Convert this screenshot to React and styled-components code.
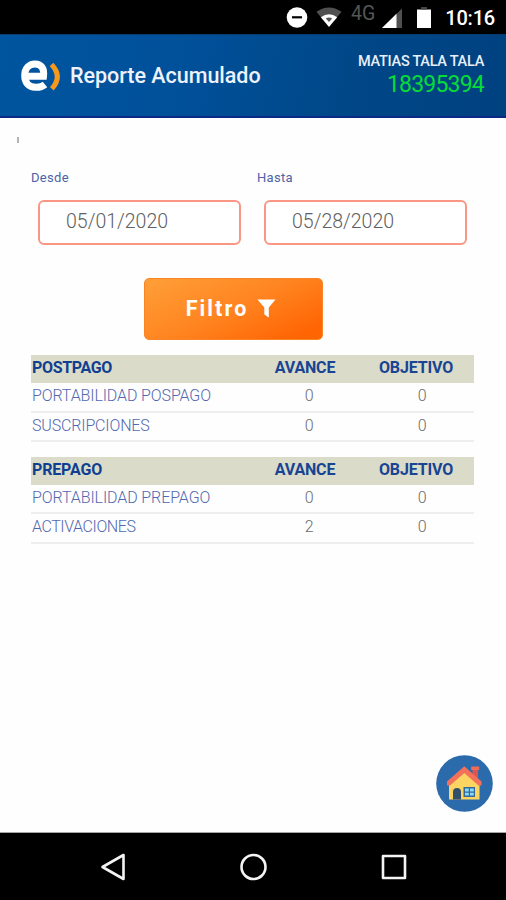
import React, { useState } from "react";
import styled, { createGlobalStyle } from "styled-components";

const GlobalStyle = createGlobalStyle`
    * {
        box-sizing: border-box;
    }
    body {
        margin: 0;
        background-color: #ffffff;
        font-family: Roboto, "Liberation Sans", sans-serif;
    }
`;

const Screen = styled.div`
    width: 506px;
    height: 900px;
    display: flex;
    flex-direction: column;
    background-color: #fefefe;
    overflow: hidden;
`;

const StatusBar = styled.div`
    height: 34px;
    flex-shrink: 0;
    background-color: #000000;
    display: flex;
    justify-content: flex-end;
    padding-right: 11px;
`;

const Clock = styled.span`
    width: 50px;
    margin-left: 14px;
    font-size: 20px;
    line-height: 37px;
    font-weight: 500;
    letter-spacing: -0.2px;
    text-align: right;
    white-space: nowrap;
    color: #ffffff;
`;

const Network = styled.span`
    width: 25px;
    margin: 0 6px 0 9px;
    font-size: 19.5px;
    line-height: 27px;
    font-weight: 400;
    color: #555555;
`;

const Header = styled.header`
    height: 84px;
    flex-shrink: 0;
    display: flex;
    justify-content: space-between;
    padding: 0 22px 0 20px;
    background: linear-gradient(100deg, #00559f 0%, #00509a 35%, #004787 70%, #004180 100%);
    border-top: 1px solid #063c6e;
    border-bottom: 2px solid #0a2a86;
`;

const Brand = styled.div`
    display: flex;
    align-items: center;
`;

const Title = styled.h1`
    margin: 0 0 0 8px;
    font-size: 21.5px;
    line-height: 26px;
    font-weight: 500;
    letter-spacing: -0.02px;
    color: #eef3fb;
`;

const User = styled.div`
    padding-top: 17px;
    text-align: right;
`;

const UserName = styled.div`
    font-size: 14.5px;
    line-height: 20px;
    font-weight: 500;
    letter-spacing: -0.27px;
    color: #e9effa;
`;

const UserCode = styled.div`
    font-size: 23px;
    line-height: 26px;
    letter-spacing: -0.8px;
    color: #06dc38;
`;

const Content = styled.main`
    flex: 1;
    display: flex;
    flex-direction: column;
    padding: 19px 32px 0 31px;
`;

const Mark = styled.div`
    width: 2px;
    height: 6px;
    margin-left: -14px;
    background-color: #b4b4b4;
`;

const Filters = styled.form`
    display: flex;
    flex-direction: column;
    margin-top: 25px;
`;

const Dates = styled.div`
    display: grid;
    grid-template-columns: 226px 1fr;
`;

const Label = styled.label`
    display: block;
    height: 20px;
    font-size: 13px;
    line-height: 20px;
    letter-spacing: 0.3px;
    color: #4d63a6;
`;

const Input = styled.input`
    display: block;
    width: 203px;
    height: 45px;
    margin: 12px 0 0 7px;
    padding: 0 0 3px 26px;
    border: 2px solid #fa9684;
    border-radius: 6px;
    background-color: #ffffff;
    font-family: inherit;
    font-size: 19.5px;
    font-weight: 300;
    letter-spacing: 0;
    color: #606060;
    outline: none;
`;

const FilterButton = styled.button`
    width: 179px;
    height: 62px;
    margin: 33px 0 0 113px;
    padding: 0 5px 2px 0;
    display: flex;
    align-items: center;
    justify-content: center;
    gap: 9px;
    border: 1px solid #f98526;
    border-radius: 5px;
    background: linear-gradient(155deg, #ff9f38 0%, #ff8420 50%, #ff6503 90%);
    font-family: inherit;
    font-size: 21.5px;
    font-weight: 700;
    letter-spacing: 2.1px;
    color: #ffffff;
`;

const Table = styled.section`
    margin-top: ${(props) => props.$top}px;
`;

const Row = styled.div`
    display: grid;
    grid-template-columns: 223px 110px 6px 104px;
    height: ${(props) => props.$height}px;
    line-height: 26px;
    font-size: 16px;
    font-weight: 300;
    border-bottom: 2px solid #eceeef;
    color: #6b6b6b;
`;

const HeadRow = styled(Row)`
    height: 28px;
    border-bottom: none;
    background-color: #dadbc9;
    font-weight: 700;
    color: #174493;
`;

const Name = styled.span`
    padding-left: 1px;
    white-space: nowrap;
    letter-spacing: ${(props) => props.$spacing || 0}px;
    color: ${(props) => (props.$head ? "#103f91" : "#5268b0")};
`;

const Value = styled.span`
    grid-column: ${(props) => props.$column};
    padding-right: ${(props) => props.$shift || 0}px;
    letter-spacing: -0.15px;
    text-align: center;
`;

const HomeButton = styled.button`
    width: 58px;
    height: 58px;
    margin: auto -19px 20px auto;
    padding: 0;
    border: none;
    background: none;
`;

const NavBar = styled.nav`
    height: 68px;
    flex-shrink: 0;
    display: flex;
    align-items: center;
    justify-content: space-between;
    padding: 0 98px 0 99px;
    border-top: 1px solid #a5a5a5;
    background-color: #000000;
`;

const StatusIcons = () => (
    <svg width="56" height="34" viewBox="286 0 56 34">
        <circle cx="297" cy="17.5" r="10.3" fill="#fff" />
        <path d="M292 17.3h10" stroke="#000" strokeWidth="2.2" />
        <path d="M316.5 11.8Q329 3 341.5 11.8L336.8 17.5Q329 11.8 321.2 17.5Z" fill="#505050" />
        <path d="M320.8 17.2Q329 11.2 337.2 17.2L329 27Z" fill="#fff" />
        <path d="M325.8 18.6Q329 16.4 332.2 18.6L329 22Z" fill="#555" />
    </svg>
);

const SignalIcons = () => (
    <svg width="49" height="34" viewBox="382 0 49 34">
        <path d="M382 28L402 8.5V28Z" fill="#505050" />
        <path d="M382 28L396.5 13.8V28Z" fill="#fff" />
        <path d="M417 9.5h14V28h-14Z" fill="#fff" />
        <path d="M421 7h6v2.5h-6Z" fill="#444" />
    </svg>
);

const Logo = () => (
    <svg width="42" height="36" viewBox="20 58 42 36">
        <path
            d="M45 84.5C42 87 39 87.5 35.5 87.3C28 87 24.7 82 24.7 75.5C24.7 68.5 29 64 35 64C41.5 64 44.500 68.5 43.500 76.2H27"
            fill="none"
            stroke="#fff"
            strokeWidth="7"
        />
        <path d="M51.500 64.5Q63 76.500 51.800 88.800" fill="none" stroke="#f8981c" strokeWidth="5" />
    </svg>
);

const FunnelIcon = () => (
    <svg width="19" height="19" viewBox="0 0 19 19">
        <path d="M.5.5H18.5L11.8 8.5V18.5L7.3 15.5V8.5Z" fill="#fff" />
    </svg>
);

const HomeIcon = () => (
    <svg width="58" height="58" viewBox="0 0 58 58">
        <circle cx="29.5" cy="29.5" r="28.3" fill="#2b6bab" />
        <path d="M37.5 14.5h5.5v13h-5.5Z" fill="#de5448" />
        <path d="M36.2 12.5h8v3.5h-8Z" fill="#f36a59" />
        <path d="M29 16.5L44.5 31V45.5H14V31Z" fill="#fcd462" />
        <path d="M29.3 12.3L46.5 27.5V31.5H43.5L29.3 19L15 31.5H12V27.5Z" fill="#f3705a" />
        <path d="M18 45.5V38Q18 34 22 34T26 38V45.5Z" fill="#31506b" />
        <path d="M28.5 33h11.5v10h-11.5Z" fill="#386895" />
        <path d="M30 34.5h3.8v3h-3.8ZM35 34.5h3.8v3H35ZM30 38.8h3.8v2.8h-3.8ZM35 38.8h3.8v2.8H35Z" fill="#84dbff" />
    </svg>
);

const NavIcon = ({ children }) => (
    <svg width="28" height="28" viewBox="0 0 28 28" fill="none" stroke="#f4f4f4" strokeWidth="2.6" strokeLinejoin="round">
        {children}
    </svg>
);

const tables = [
    {
        title: "POSTPAGO",
        top: 15,
        spacing: -0.35,
        rows: [
            { name: "PORTABILIDAD POSPAGO", spacing: -0.12, avance: 0, objetivo: 0 },
            { name: "SUSCRIPCIONES", spacing: -0.15, avance: 0, objetivo: 0 },
        ],
    },
    {
        title: "PREPAGO",
        top: 14.5,
        spacing: -0.15,
        rows: [
            { name: "PORTABILIDAD PREPAGO", spacing: -0.1, avance: 0, objetivo: 0 },
            { name: "ACTIVACIONES", spacing: -0.42, avance: 2, objetivo: 0 },
        ],
    },
];

const App = () => {
    const [dates, setDates] = useState({ desde: "05/01/2020", hasta: "05/28/2020" });

    const inputchange = (e) => {
        setDates({ ...dates, [e.target.name]: e.target.value });
    };

    return (
        <>
            <GlobalStyle />
            <Screen>
                <StatusBar>
                    <StatusIcons />
                    <Network>4G</Network>
                    <SignalIcons />
                    <Clock>10:16</Clock>
                </StatusBar>
                <Header>
                    <Brand>
                        <Logo />
                        <Title>Reporte Acumulado</Title>
                    </Brand>
                    <User>
                        <UserName>MATIAS TALA TALA</UserName>
                        <UserCode>18395394</UserCode>
                    </User>
                </Header>
                <Content>
                    <Mark />
                    <Filters onSubmit={(e) => e.preventDefault()}>
                        <Dates>
                            <div>
                                <Label htmlFor="desde">Desde</Label>
                                <Input id="desde" name="desde" value={dates.desde} onChange={inputchange} />
                            </div>
                            <div>
                                <Label htmlFor="hasta">Hasta</Label>
                                <Input id="hasta" name="hasta" value={dates.hasta} onChange={inputchange} />
                            </div>
                        </Dates>
                        <FilterButton type="submit">
                            Filtro
                            <FunnelIcon />
                        </FilterButton>
                    </Filters>
                    {tables.map((table) => (
                        <Table key={table.title} $top={table.top}>
                            <HeadRow>
                                <Name $head $spacing={table.spacing}>{table.title}</Name>
                                <Value $column={2} $shift={8}>AVANCE</Value>
                                <Value $column={4} $shift={12}>OBJETIVO</Value>
                            </HeadRow>
                            {table.rows.map((row) => (
                                <Row key={row.name} $height={29.5}>
                                    <Name $spacing={row.spacing}>{row.name}</Name>
                                    <Value $column={2}>{row.avance}</Value>
                                    <Value $column={4}>{row.objetivo}</Value>
                                </Row>
                            ))}
                        </Table>
                    ))}
                    <HomeButton aria-label="Inicio">
                        <HomeIcon />
                    </HomeButton>
                </Content>
                <NavBar>
                    <NavIcon>
                        <path d="M3.5 14L24.5 2V26Z" />
                    </NavIcon>
                    <NavIcon>
                        <circle cx="13.5" cy="14" r="12" />
                    </NavIcon>
                    <NavIcon>
                        <path d="M3 3H25V25H3Z" />
                    </NavIcon>
                </NavBar>
            </Screen>
        </>
    );
};

export default App;
